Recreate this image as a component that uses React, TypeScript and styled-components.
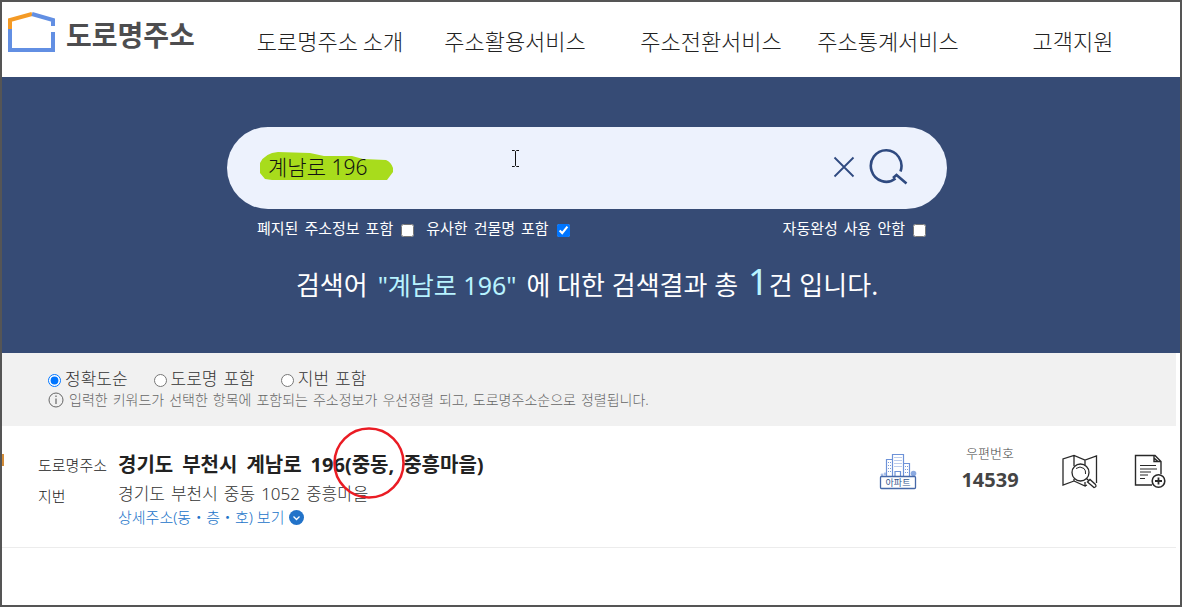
import React, { useState } from "react";
import styled, { createGlobalStyle } from "styled-components";

const GlobalStyle = createGlobalStyle`
  *, *::before, *::after { box-sizing: border-box; }
  body {
    margin: 0;
    background: #fff;
    color: #333;
    font-family: "Noto Sans", "Noto Sans CJK KR", sans-serif;
  }
  h1, h2, p, ul, dl, dd { margin: 0; padding: 0; }
  a { color: inherit; text-decoration: none; }
  button { border: 0; padding: 0; background: none; font: inherit; color: inherit; cursor: pointer; }
`;

const Page = styled.div`
  min-height: 100vh;
  border: 2px solid #555;
`;

const Header = styled.header`
  display: flex;
  align-items: center;
  height: 75px;
`;

const Brand = styled.a`
  display: flex;
  flex: 0 0 240px;
  align-items: flex-start;
  gap: 9px;
  padding: 0 0 14px 5px;
  color: #4d4d4f;
  font-size: 28px;
  font-weight: 700;
  line-height: 40px;
  white-space: nowrap;

  span { padding-top: 4px; }
`;

const Nav = styled.nav`
  display: grid;
  flex: 1;
  grid-template-columns: 176fr 194fr 198fr 156fr 214fr;
`;

const NavLink = styled.a`
  color: #222;
  font-family: "Noto Sans CJK KR", sans-serif;
  font-size: 22px;
  font-weight: 300;
  line-height: 32px;
  text-align: center;
  white-space: nowrap;
`;

const Hero = styled.section`
  display: flex;
  flex-direction: column;
  align-items: center;
  height: 276px;
  padding: 50px 8px 0 0;
  background: #364b75;
  color: #fff;
`;

const SearchForm = styled.form`
  width: 720px;
  max-width: 100%;
`;

const SearchBox = styled.div`
  position: relative;
  display: flex;
  align-items: center;
  height: 82px;
  padding: 0 39px 2px 41px;
  border-radius: 41px;
  background: #edf2fd;
  color: #2f4a80;
`;

const Marker = styled.svg`
  position: absolute;
  top: 25px;
  left: 33px;
`;

const Caret = styled.svg`
  position: absolute;
  top: 23px;
  left: 284px;
`;

const SearchInput = styled.input`
  position: relative;
  flex: 1;
  min-width: 0;
  padding: 0;
  border: 0;
  outline: 0;
  background: transparent;
  color: #111;
  font-family: inherit;
  font-size: 21px;
  font-weight: 300;
  line-height: 32px;
`;

const IconButton = styled.button`
  display: flex;
  margin-left: 14px;
`;

const Options = styled.div`
  display: flex;
  gap: 12px;
  padding: 9px 21px 0 30px;
`;

const Phrase = styled.span<{ $gap: number }>`
  display: inline-flex;
  gap: ${(p) => p.$gap}px;
`;

const CheckLabel = styled.label<{ $end?: boolean }>`
  display: flex;
  align-items: center;
  gap: 8px;
  margin-left: ${(p) => (p.$end ? "auto" : "0")};
  font-size: 15px;
  line-height: 20px;
  white-space: nowrap;

  input { width: 13px; height: 13px; margin: 4px 0 0; }
`;

const Summary = styled.h1`
  display: flex;
  align-items: baseline;
  gap: 10px;
  padding-top: 18px;
  font-size: 26px;
  font-weight: 400;
  line-height: 52px;
  white-space: nowrap;

  em { color: #b8f3ff; font-size: 25px; font-style: normal; }
  strong { color: #b8f3ff; font-size: 36px; font-weight: 400; }
`;

const SortBar = styled.section`
  height: 73px;
  margin-right: 4px;
  padding: 15px 0 0 46px;
  background: #f1f1f1;
`;

const SortOptions = styled.div`
  display: flex;
  gap: 26px;
`;

const RadioLabel = styled.label`
  display: flex;
  align-items: center;
  gap: 4px;
  color: #333;
  font-size: 17px;
  font-weight: 300;
  line-height: 22px;

  input { width: 13px; height: 13px; margin: 2px 0 0; }
`;

const Note = styled.p`
  display: flex;
  align-items: center;
  gap: 5px;
  color: #666;
  font-size: 14px;
  font-weight: 300;
  line-height: 20px;
`;

const Result = styled.article`
  display: flex;
  position: relative;
  height: 122px;
  margin-right: 4px;
  padding-left: 36px;
  border-bottom: 1px solid #ececec;
`;

const EdgeMark = styled.i`
  position: absolute;
  top: 28px;
  left: 0;
  width: 2px;
  height: 12px;
  background: #d38c38;
`;

const AddressList = styled.dl`
  display: grid;
  flex: 1;
  grid-template-columns: 80px 1fr;
  align-content: start;
  padding-top: 24px;
  white-space: nowrap;
`;

const Term = styled.dt`
  color: #222;
  font-size: 15px;
  font-weight: 300;
  line-height: 30px;

  & ~ & { line-height: 32px; }
`;

const RoadAddress = styled.dd`
  color: #222;
  font-size: 20px;
  font-weight: 700;
  line-height: 30px;
`;

const Circled = styled.span`
  position: relative;
`;

const Ring = styled.svg`
  position: absolute;
  top: -24px;
  left: -19px;
`;

const LotAddress = styled.dd`
  height: 26px;
  color: #333;
  font-size: 17px;
  font-weight: 300;
  line-height: 28px;
`;

const Detail = styled.dd`
  grid-column: 2;
  margin-top: -5px;
`;

const DetailButton = styled.button`
  display: flex;
  align-items: center;
  gap: 5px;
  color: #2273c9;
  font-size: 15px;
  font-weight: 300;
  line-height: 20px;
`;

const Tools = styled.div`
  display: flex;
  align-items: flex-start;
  padding: 27px 10px 0 0;
`;

const Postal = styled.div`
  width: 76px;
  margin: -10px 34px 0 35px;
  text-align: center;

  span { display: block; color: #444; font-size: 13px; font-weight: 300; line-height: 20px; }
  strong { display: block; color: #444; font-size: 20px; line-height: 34px; }
`;

const ToolButton = styled.button`
  display: flex;
  margin: 1px 0 0 36px;

  &:first-of-type { margin-left: 0; }
`;

const Logo = () => (
  <svg width="50" height="42" viewBox="0 0 50 42" fill="none" strokeWidth="4" aria-hidden="true">
    <path d="M3 18V9L25 3" stroke="#f49a25" />
    <path d="M25 3L46 9V15M46 21V39H3V18" stroke="#628fe3" />
  </svg>
);

const CloseIcon = () => (
  <svg width="22" height="22" viewBox="0 0 22 22" fill="none" stroke="currentColor" strokeWidth="1.8">
    <path d="M1.5 1.5L20.5 20.5M20.5 1.5L1.5 20.5" />
  </svg>
);

const SearchIcon = () => (
  <svg width="39" height="40" viewBox="0 0 39 40" fill="none" stroke="currentColor" strokeWidth="2.6">
    <path d="M31.500 24.500A15.300 15.800 0 1 0 26.500 31.500" />
    <path d="M24 31L27.500 28L37.500 36.500" />
  </svg>
);

const ApartmentIcon = () => (
  <svg width="38" height="37" viewBox="0 0 38 37" fill="none" role="img" aria-label="아파트">
    <circle cx="34.5" cy="20.5" r="2.8" fill="#8ba9e0" />
    <circle cx="3" cy="22" r="1.4" fill="#a9c0ea" />
    <circle cx="6" cy="21" r="1.4" fill="#a9c0ea" />
    <path d="M7.5 23V6.5H13.5M13.5 23V1.5H24.5V23M24.5 10.5H30.5V23M16 23V18.5H21.5V23" stroke="#6d92d8" strokeWidth="1.2" />
    <path d="M9.5 9V21M11.5 9V21M16 4V16M18 4V16M20 4V16M22 4V16M26.5 13V21M28.5 13V21" stroke="#7a9bdb" strokeWidth="1" strokeDasharray="1 2" />
    <rect x="1.5" y="23.5" width="35" height="12" rx="1" fill="#fff" stroke="#4668a8" strokeWidth="1.3" />
    <text x="19" y="33" textAnchor="middle" fill="#34578f" fontSize="9" fontFamily="Noto Sans CJK KR, sans-serif">아파트</text>
  </svg>
);

const MapIcon = () => (
  <svg width="36" height="36" viewBox="0 0 36 36" fill="none" stroke="#292929" strokeWidth="1.3">
    <path d="M12 27L1 31V5L12 1.5L23 6L34.5 2V29M12 1.5V12M23 6V11M12 27V25M12 27L23 32V28M23 32L25 31" />
    <circle cx="18.5" cy="18.5" r="8.5" fill="#fff" />
    <path d="M14 14.5Q18 11.5 22 14.5Q24 16.5 23.5 20" strokeWidth="1" />
    <path d="M24.5 24.5L27 27M25.500 28L28 25.5L33.5 30.5Q35 33 32 33.5Z" />
  </svg>
);

const DocumentIcon = () => (
  <svg width="32" height="35" viewBox="0 0 32 35" fill="none" stroke="#292929" strokeWidth="1.4">
    <path d="M18 31H1.5V1.5H21L27 7.5V20M20 1.5V7.5H27M20 4L24 7.5" />
    <path d="M6 11.5H22M6 15H23M6 18H17M6 21H14M6 24.500H11" strokeWidth="1.2" />
    <circle cx="24.5" cy="27" r="6.3" fill="#fff" strokeWidth="1.6" />
    <path d="M24.5 23.5V30.5M21 27H28" strokeWidth="1.8" />
  </svg>
);

const Words = ({ text, gap }: { text: string; gap: number }) => (
  <Phrase $gap={gap}>
    {text.split(" ").map((word, i) => (
      <span key={i}>{word}</span>
    ))}
  </Phrase>
);

const menu = ["도로명주소 소개", "주소활용서비스", "주소전환서비스", "주소통계서비스", "고객지원"];
const sorts = ["정확도순", "도로명 포함", "지번 포함"];

export default function App() {
  const [query, setQuery] = useState("계남로 196");
  const [sort, setSort] = useState(sorts[0]);

  return (
    <Page>
      <GlobalStyle />
      <Header>
        <Brand href="#home">
          <Logo />
          <span>도로명주소</span>
        </Brand>
        <Nav>
          {menu.map((item) => (
            <NavLink key={item} href="#menu">{item}</NavLink>
          ))}
        </Nav>
      </Header>

      <Hero>
        <SearchForm onSubmit={(e) => e.preventDefault()}>
          <SearchBox>
            <Marker width="134" height="30" viewBox="0 0 134 30" aria-hidden="true">
              <path d="M0 11Q5 1 18 0L50 1L64 4H92L103 7L126 8Q131 10 133 16V20L127 28H12L5 27L0 21Z" fill="#a8dc1c" />
            </Marker>
            <SearchInput aria-label="주소 검색" value={query} onChange={(e) => setQuery(e.target.value)} />
            <Caret width="9" height="17" viewBox="0 0 9 17" fill="none" stroke="#111" aria-hidden="true">
              <path d="M1 .5H3.5L4.5 1.5L5.5 .5H8M4.5 1.5V15.5M1 16.5H3.5L4.5 15.5L5.5 16.5H8" />
            </Caret>
            <IconButton type="button" aria-label="지우기" onClick={() => setQuery("")}><CloseIcon /></IconButton>
            <IconButton type="submit" aria-label="검색"><SearchIcon /></IconButton>
          </SearchBox>
          <Options>
            <CheckLabel><Words text="폐지된 주소정보 포함" gap={6} /><input type="checkbox" /></CheckLabel>
            <CheckLabel><Words text="유사한 건물명 포함" gap={6} /><input type="checkbox" defaultChecked /></CheckLabel>
            <CheckLabel $end><Words text="자동완성 사용 안함" gap={6} /><input type="checkbox" /></CheckLabel>
          </Options>
        </SearchForm>
        <Summary>
          <span>검색어</span>
          <em>"계남로 196"</em>
          <span>에 대한 검색결과 총</span>
          <span><strong>1</strong>건 입니다.</span>
        </Summary>
      </Hero>

      <SortBar>
        <SortOptions>
          {sorts.map((name) => (
            <RadioLabel key={name}>
              <input type="radio" name="sort" checked={sort === name} onChange={() => setSort(name)} />
              <Words text={name} gap={6} />
            </RadioLabel>
          ))}
        </SortOptions>
        <Note>
          <svg width="16" height="16" viewBox="0 0 16 16" fill="none" stroke="#666" aria-hidden="true">
            <circle cx="8" cy="8" r="7" />
            <path d="M8 6.5V12M8 3.5V5" strokeWidth="1.2" />
          </svg>
          <Words text="입력한 키워드가 선택한 항목에 포함되는 주소정보가 우선정렬 되고, 도로명주소순으로 정렬됩니다." gap={5} />
        </Note>
      </SortBar>

      <Result>
        <EdgeMark />
        <AddressList>
          <Term>도로명주소</Term>
          <RoadAddress>
            <Phrase $gap={9}>
              <span>경기도</span>
              <span>부천시</span>
              <span>계남로</span>
              <span>
                196(
                <Circled>
                  중동,
                  <Ring width="72" height="72" viewBox="0 0 72 72" fill="none" aria-hidden="true">
                    <circle cx="36" cy="36" r="34.5" stroke="#ea1c24" strokeWidth="2.5" />
                  </Ring>
                </Circled>
              </span>
              <span>중흥마을)</span>
            </Phrase>
          </RoadAddress>
          <Term>지번</Term>
          <LotAddress><Words text="경기도 부천시 중동 1052 중흥마을" gap={6} /></LotAddress>
          <Detail>
            <DetailButton type="button">
              상세주소(동・층・호) 보기
              <svg width="15" height="15" viewBox="0 0 15 15" fill="none" aria-hidden="true">
                <circle cx="7.5" cy="7.5" r="7.5" fill="#2273c9" />
                <path d="M4.5 6.5L7.5 9.5L10.5 6.5" stroke="#fff" strokeWidth="1.3" />
              </svg>
            </DetailButton>
          </Detail>
        </AddressList>
        <Tools>
          <ApartmentIcon />
          <Postal>
            <span>우편번호</span>
            <strong>14539</strong>
          </Postal>
          <ToolButton type="button" aria-label="지도 보기"><MapIcon /></ToolButton>
          <ToolButton type="button" aria-label="상세 정보"><DocumentIcon /></ToolButton>
        </Tools>
      </Result>
    </Page>
  );
}
